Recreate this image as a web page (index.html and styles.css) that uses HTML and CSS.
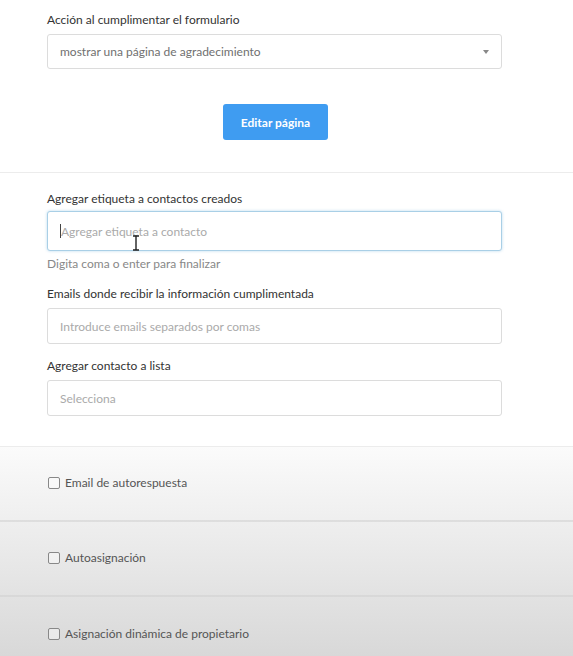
FILE: index.html
```html
<!DOCTYPE html>
<html lang="es">
<head>
<meta charset="utf-8">
<link rel="stylesheet" href="styles.css">
</head>
<body>
<section class="block top">
  <div class="field">
    <label class="lbl">Acción al cumplimentar el formulario</label>
    <div class="select">
      <span class="select-text">mostrar una página de agradecimiento</span>
      <span class="arrow"></span>
    </div>
  </div>
  <div class="btn-row"><button class="btn">Editar página</button></div>
</section>
<section class="block mid">
  <div class="field">
    <label class="lbl">Agregar etiqueta a contactos creados</label>
    <div class="input focused">
      <span class="caret"></span><span class="ph clip">Agregar etiqueta a contacto</span>
      <svg class="ibeam" width="8" height="16" viewBox="0 0 8 16"><path d="M1 1h6M4 1v14M1 15h6" stroke="#222" stroke-width="1.4" fill="none"/></svg>
    </div>
    <div class="help">Digita coma o enter para finalizar</div>
  </div>
  <div class="field">
    <label class="lbl">Emails donde recibir la información cumplimentada</label>
    <div class="input"><span class="ph">Introduce emails separados por comas</span></div>
  </div>
  <div class="field">
    <label class="lbl">Agregar contacto a lista</label>
    <div class="input"><span class="ph">Selecciona</span></div>
  </div>
</section>
<section class="options">
  <div class="opt"><span class="box"></span><span>Email de autorespuesta</span></div>
  <div class="opt"><span class="box"></span><span>Autoasignación</span></div>
  <div class="opt"><span class="box"></span><span>Asignación dinámica de propietario</span></div>
</section>
</body>
</html>
```
FILE: styles.css
```css
html, body { margin: 0; padding: 0; }
body {
  font-family: Lato, "Open Sans", sans-serif;
  font-size: 12px;
  color: #333;
  background: #fff;
  width: 573px;
  height: 656px;
  overflow: hidden;
}
.block { padding: 0 71px 0 47px; }
.top { padding-top: 12px; padding-bottom: 32px; border-bottom: 1px solid #ececec; }
.mid { padding-top: 18px; padding-bottom: 30px; border-bottom: 1px solid #ececec; }
.field { display: flex; flex-direction: column; }
.lbl { font-size: 12px; line-height: 16px; color: #333; margin-bottom: 6px; }
.select, .input {
  box-sizing: border-box;
  height: 36px;
  border: 1px solid #dcdcdc;
  border-radius: 3px;
  display: flex;
  align-items: center;
  padding: 0 12px;
  background: #fff;
  position: relative;
}
.select { height: 35px; }
.select-text { color: #707070; font-size: 12px; flex: 1; }
.arrow {
  width: 0; height: 0;
  border-left: 3px solid transparent;
  border-right: 3px solid transparent;
  border-top: 4px solid #888;
}
.btn-row { display: flex; justify-content: center; padding-top: 35px; padding-left: 2px; }
.btn {
  width: 105px; height: 36px;
  border: none; border-radius: 3px;
  background: #3f9cf1;
  color: #fff;
  font-family: inherit;
  font-size: 12px;
  font-weight: 700;
}
.input.focused {
  height: 40px;
  margin-top: -2px;
  border-color: #a9cfe6;
  box-shadow: 0 0 3px rgba(100, 170, 215, 0.45);
}
.ph { color: #aaa; font-size: 12px; white-space: nowrap; }
.clip { display: inline-block; width: 148px; overflow: hidden; }
.caret { width: 1px; height: 14px; background: #444; }
.ibeam { position: absolute; left: 84px; top: 23px; }
.help { color: #888; font-size: 12px; line-height: 16px; margin-top: 5px; margin-bottom: 14px; }
.mid .field:nth-child(2) { margin-bottom: 14px; }
.options {
  background: linear-gradient(#fbfbfb, #d8d8d8);
  height: 210px;
}
.opt {
  height: 75px;
  box-sizing: border-box;
  display: flex;
  align-items: center;
  gap: 5px;
  padding-left: 48px;
  padding-bottom: 2px;
  color: #555;
  font-size: 12px;
  border-bottom: 2px solid rgba(210, 210, 210, 0.6);
}
.opt:last-child { border-bottom: none; }
.box {
  width: 10px; height: 10px;
  border: 1px solid #888;
  border-radius: 2px;
  background: rgba(255,255,255,0.4);
}
```
